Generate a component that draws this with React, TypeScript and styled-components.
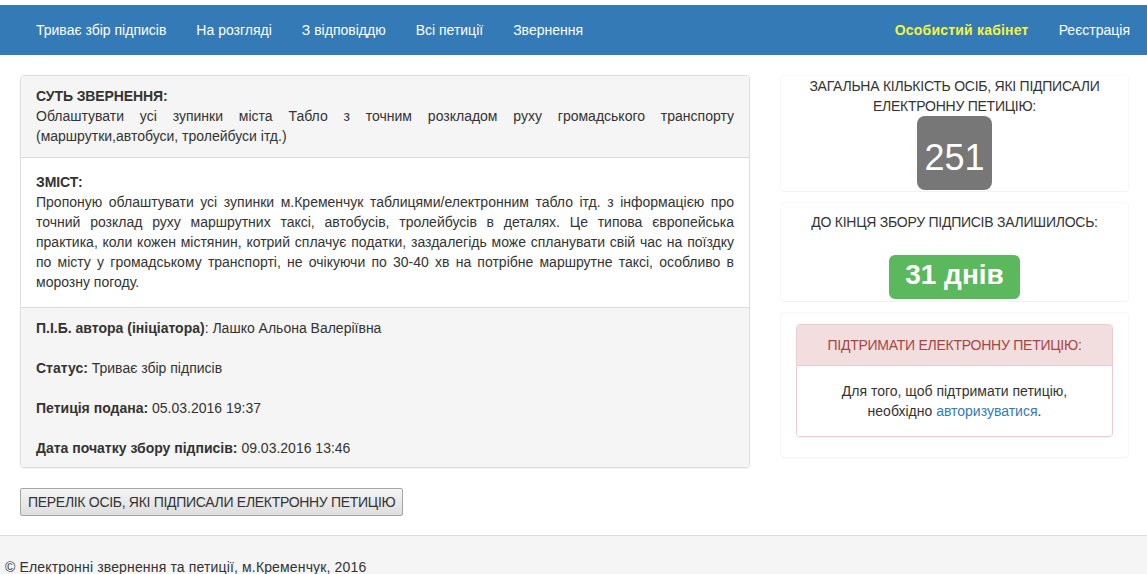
import React from "react";
import styled, { createGlobalStyle } from "styled-components";

const Global = createGlobalStyle`
  html, body { margin: 0; padding: 0; background: #fff; }
  body {
    font-family: "Liberation Sans", Arial, sans-serif;
    font-size: 14px;
    line-height: 20px;
    color: #333;
  }
  * { box-sizing: border-box; }
`;

const Page = styled.div`
  padding-top: 5px;
`;

const NavBar = styled.nav`
  height: 50px;
  background: #337ab7;
  display: flex;
  justify-content: space-between;
  align-items: center;
  padding: 0 2px 0 21px;
`;

const NavGroup = styled.ul`
  display: flex;
  list-style: none;
  margin: 0;
  padding: 0;
`;

const NavLink = styled.a<{ $accent?: boolean }>`
  display: block;
  padding: 15px 15px;
  line-height: 20px;
  color: ${(p) => (p.$accent ? "#f4f43c" : "#fff")};
  font-weight: ${(p) => (p.$accent ? "bold" : "normal")};
  letter-spacing: ${(p) => (p.$accent ? "0.2px" : "0")};
  text-decoration: none;
`;

const Main = styled.main`
  display: flex;
  align-items: flex-start;
  gap: 30px;
  padding: 20px 0 0 20px;
`;

const LeftCol = styled.div`
  width: 730px;
`;

const Panel = styled.div`
  border: 1px solid #ddd;
  border-radius: 4px;
  overflow: hidden;
  box-shadow: 0 1px 1px rgba(0, 0, 0, 0.05);
`;

const Section = styled.div<{ $shaded?: boolean; $pad: string }>`
  background: ${(p) => (p.$shaded ? "#f5f5f5" : "#fff")};
  padding: ${(p) => p.$pad};
  & + & { border-top: 1px solid #ddd; }
`;

const Heading = styled.div`
  font-weight: bold;
  text-transform: uppercase;
  letter-spacing: -0.1px;
`;

const Justified = styled.div`
  text-align: justify;
`;

const InfoLine = styled.p`
  margin: 0;
  & + & { margin-top: 20px; }
`;

const Button = styled.button`
  margin-top: 20px;
  font-family: "Liberation Sans", Arial, sans-serif;
  font-size: 14px;
  line-height: 20px;
  letter-spacing: -0.3px;
  color: #333;
  padding: 3px 7px;
  border: 1px solid #a5a5a5;
  border-radius: 2px;
  background: linear-gradient(#f4f4f4, #dedede);
`;

const RightCol = styled.div`
  width: 349px;
  display: flex;
  flex-direction: column;
  gap: 10px;
`;

const Well = styled.div<{ $pad: string }>`
  border: 1px solid #f8f8f8;
  border-bottom-color: #f2f2f2;
  border-radius: 4px;
  padding: ${(p) => p.$pad};
  text-align: center;
`;

const Caption = styled.div`
  text-transform: uppercase;
  letter-spacing: -0.25px;
`;

const CountBadge = styled.span`
  display: inline-block;
  background: #777;
  color: #fff;
  font-size: 36px;
  line-height: 64px;
  height: 74px;
  padding: 10px 7px 0;
  border-radius: 8px;
`;

const DaysBadge = styled.span`
  display: inline-block;
  margin-top: 23px;
  background: #5cb85c;
  color: #fff;
  font-weight: bold;
  font-size: 28px;
  line-height: 40px;
  height: 44px;
  padding: 0 16px 4px;
  border-radius: 6px;
`;

const DangerPanel = styled.div`
  border: 1px solid #ebccd1;
  border-radius: 4px;
  overflow: hidden;
  margin: 0 15px;
  box-shadow: 0 1px 1px rgba(0, 0, 0, 0.05);
`;

const DangerHead = styled.div`
  background: #f2dede;
  color: #a94442;
  border-bottom: 1px solid #ebccd1;
  padding: 10px 15px;
  text-transform: uppercase;
  letter-spacing: -0.25px;
`;

const DangerBody = styled.div`
  padding: 15px;
  background: #fff;
`;

const Link = styled.a`
  color: #337ab7;
  text-decoration: none;
`;

const Footer = styled.footer`
  margin-top: 19px;
  border-top: 1px solid #ddd;
  background: #f5f5f5;
  padding: 21px 5px 20px;
  letter-spacing: 0.15px;
`;

export default function App() {
  return (
    <Page>
      <Global />
      <NavBar>
        <NavGroup>
          <li><NavLink href="#">Триває збір підписів</NavLink></li>
          <li><NavLink href="#">На розгляді</NavLink></li>
          <li><NavLink href="#">З відповіддю</NavLink></li>
          <li><NavLink href="#">Всі петиції</NavLink></li>
          <li><NavLink href="#">Звернення</NavLink></li>
        </NavGroup>
        <NavGroup>
          <li><NavLink href="#" $accent>Особистий кабінет</NavLink></li>
          <li><NavLink href="#">Реєстрація</NavLink></li>
        </NavGroup>
      </NavBar>
      <Main>
        <LeftCol>
          <Panel>
            <Section $shaded $pad="10px 15px 11px">
              <Heading>Суть звернення:</Heading>
              <Justified>
                Облаштувати усі зупинки міста Табло з точним розкладом руху громадського транспорту
                (маршрутки,автобуси, тролейбуси ітд.)
              </Justified>
            </Section>
            <Section $pad="14px 15px 15px">
              <Heading>Зміст:</Heading>
              <Justified>
                Пропоную облаштувати усі зупинки м.Кременчук таблицями/електронним табло ітд. з
                інформацією про точний розклад руху маршрутних таксі, автобусів, тролейбусів в
                деталях. Це типова європейська практика, коли кожен містянин, котрий сплачує податки,
                заздалегідь може спланувати свій час на поїздку по місту у громадському транспорті,
                не очікуючи по 30-40 хв на потрібне маршрутне таксі, особливо в морозну погоду.
              </Justified>
            </Section>
            <Section $shaded $pad="10px 15px 9px">
              <InfoLine><b>П.І.Б. автора (ініціатора)</b>: Лашко Альона Валеріївна</InfoLine>
              <InfoLine><b>Статус:</b> Триває збір підписів</InfoLine>
              <InfoLine><b>Петиція подана:</b> 05.03.2016 19:37</InfoLine>
              <InfoLine><b>Дата початку збору підписів:</b> 09.03.2016 13:46</InfoLine>
            </Section>
          </Panel>
          <Button>ПЕРЕЛІК ОСІБ, ЯКІ ПІДПИСАЛИ ЕЛЕКТРОННУ ПЕТИЦІЮ</Button>
        </LeftCol>
        <RightCol>
          <Well $pad="0 0 1px">
            <Caption>Загальна кількість осіб, які підписали електронну петицію:</Caption>
            <CountBadge>251</CountBadge>
          </Well>
          <Well $pad="9px 0 2px">
            <Caption>До кінця збору підписів залишилось:</Caption>
            <DaysBadge>31 днів</DaysBadge>
          </Well>
          <Well $pad="11px 0 20px">
            <DangerPanel>
              <DangerHead>Підтримати електронну петицію:</DangerHead>
              <DangerBody>
                Для того, щоб підтримати петицію,
                <br />
                необхідно <Link href="#">авторизуватися</Link>.
              </DangerBody>
            </DangerPanel>
          </Well>
        </RightCol>
      </Main>
      <Footer>© Електронні звернення та петиції, м.Кременчук, 2016</Footer>
    </Page>
  );
}
